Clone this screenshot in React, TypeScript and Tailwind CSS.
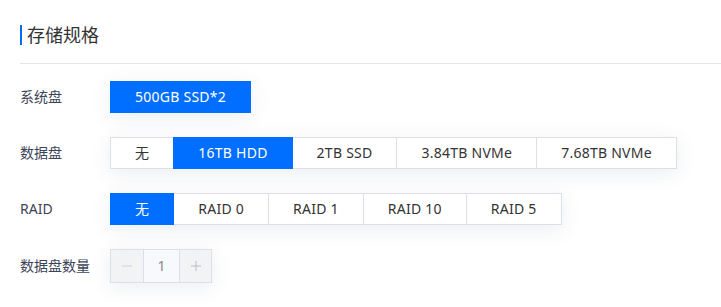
import { Minus, Plus } from 'lucide-react';

const dataDisks = ['无', '16TB HDD', '2TB SSD', '3.84TB NVMe', '7.68TB NVMe'];
const raids = ['无', 'RAID 0', 'RAID 1', 'RAID 10', 'RAID 5'];

function Segmented({ items, active }: { items: string[]; active: number }) {
  return (
    <div className="flex shadow-[0_4px_20px_rgba(60,80,120,0.10)]">
      {items.map((item, i) => (
        <div
          key={item}
          className={
            'h-8 px-6 flex items-center border text-sm leading-none tracking-[0.25px] ' +
            (i > 0 ? '-ml-px ' : '') +
            (i === active ? 'bg-[#006eff] border-[#006eff] text-white relative' : 'bg-white border-[#dcdfe6] text-[#333]')
          }
        >
          {item}
        </div>
      ))}
    </div>
  );
}

function Row({ label, children }: { label: string; children: React.ReactNode }) {
  return (
    <div className="flex items-center">
      <div className="w-[90px] text-sm text-[#3c4458]">{label}</div>
      {children}
    </div>
  );
}

export default function App() {
  return (
    <div className="min-h-screen bg-white pl-5 font-['Noto_Sans','Noto_Sans_CJK_SC',sans-serif]">
      <div className="h-[64px] pt-[25px] border-b border-[#e5e5e5]">
        <div className="flex items-center gap-[5px]">
          <div className="w-[2px] h-5 bg-[#006eff]" />
          <span className="text-lg leading-5 text-[#333]">存储规格</span>
        </div>
      </div>

      <div className="pt-[17px] flex flex-col gap-6">
        <Row label="系统盘">
          <Segmented items={['500GB SSD*2']} active={0} />
        </Row>
        <Row label="数据盘">
          <Segmented items={dataDisks} active={1} />
        </Row>
        <Row label="RAID">
          <Segmented items={raids} active={0} />
        </Row>
        <Row label="数据盘数量">
          <div className="flex h-[34px] border border-[#dcdfe6] shadow-[0_4px_20px_rgba(60,80,120,0.10)]">
            <div className="w-8 flex items-center justify-center bg-[#f2f3f5] text-[#c0c4cc]">
              <Minus className="w-4 h-4" strokeWidth={1} />
            </div>
            <div className="w-[37px] flex items-center justify-center bg-[#f7f9fc] border-x border-[#dcdfe6] text-sm text-[#888]">
              1
            </div>
            <div className="w-[31px] flex items-center justify-center bg-[#f2f3f5] text-[#a0a4ac]">
              <Plus className="w-4 h-4" strokeWidth={1} />
            </div>
          </div>
        </Row>
      </div>
    </div>
  );
}
